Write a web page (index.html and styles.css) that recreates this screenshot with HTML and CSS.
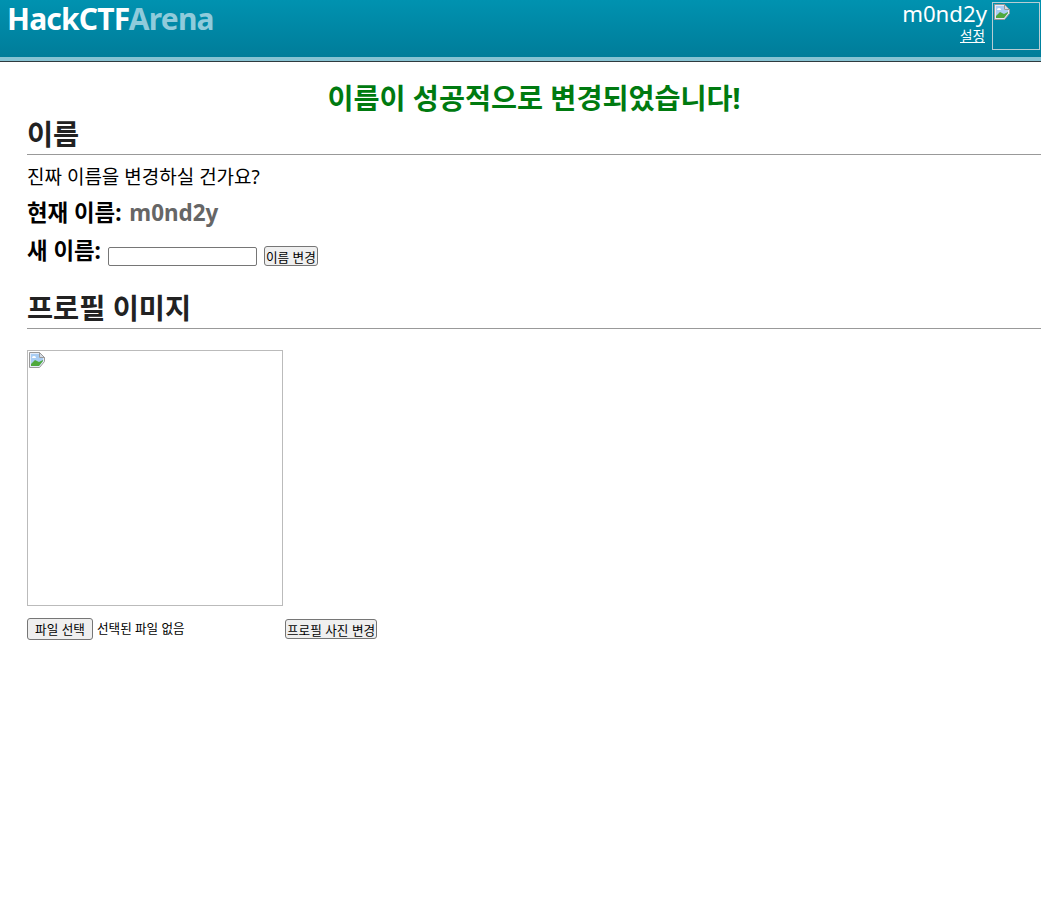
FILE: index.html
```html
<!DOCTYPE html>
<html lang="ko">
<head>
<meta charset="utf-8">
<title>HackCTFArena</title>
<link rel="stylesheet" href="styles.css">
</head>
<body>
<header class="topbar">
  <div class="logo"><span class="logo-a">HackCTF</span><span class="logo-b">Arena</span></div>
  <div class="user">
    <div class="user-text">
      <div class="user-name">m0nd2y</div>
      <a class="user-link" href="#">설정</a>
    </div>
    <div class="avatar">
      <svg class="broken" width="16" height="16" viewBox="0 0 16 16"><path d="M.5.5h10l5 5v4l-5 6H.5z" fill="#e4ebf7" stroke="#9a9a9a"/><path d="M2 2h8v4h4v3l-4 5H2z" fill="#a9cdf3"/><path d="M3 6a2 2 0 0 1 4 0z" fill="#fff"/><path d="M2 14V12l4-4 4 2 4-2v1l-4 5z" fill="#4fa83d"/><path d="M10.500.5v5h5z" fill="#d5dbe4" stroke="#9a9a9a"/></svg>
    </div>
  </div>
</header>
<main class="content">
  <div class="notice">이름이 성공적으로 변경되었습니다!</div>
  <section class="panel">
    <h2 class="section-title">이름</h2>
    <p class="lead">진짜 이름을 변경하실 건가요?</p>
    <p class="field current"><b>현재 이름:</b> <span class="muted">m0nd2y</span></p>
    <form class="field new-name">
      <b>새 이름:</b>
      <input class="name-input" type="text">
      <button class="btn" type="button">이름 변경</button>
    </form>
  </section>
  <section class="panel">
    <h2 class="section-title">프로필 이미지</h2>
    <div class="photo">
      <svg class="broken" width="16" height="16" viewBox="0 0 16 16"><path d="M.5.5h10l5 5v4l-5 6H.5z" fill="#e4ebf7" stroke="#9a9a9a"/><path d="M2 2h8v4h4v3l-4 5H2z" fill="#a9cdf3"/><path d="M3 6a2 2 0 0 1 4 0z" fill="#fff"/><path d="M2 14V12l4-4 4 2 4-2v1l-4 5z" fill="#4fa83d"/><path d="M10.500.5v5h5z" fill="#d5dbe4" stroke="#9a9a9a"/></svg>
    </div>
    <form class="upload">
      <div class="file">
        <button class="btn file-btn" type="button">파일 선택</button>
        <span class="file-label">선택된 파일 없음</span>
      </div>
      <button class="btn" type="button">프로필 사진 변경</button>
    </form>
  </section>
</main>
</body>
</html>
```
FILE: styles.css
```css
* { box-sizing: border-box; }
html, body { margin: 0; padding: 0; background: #fff; }
body { font-family: "Noto Sans", "Noto Sans CJK KR", sans-serif; color: #000; }
.topbar {
  height: 62px;
  display: flex;
  justify-content: space-between;
  background: linear-gradient(#0092b0, #007b98);
  border-bottom: 1px solid #2f3b3f;
  box-shadow: inset 0 -4px 0 #86c3d3;
}
.logo { font-size: 30px; font-weight: 700; line-height: 38px; padding-left: 7px; letter-spacing: -0.8px; }
.logo-a { color: #fff; }
.logo-b { color: #8fcbdb; }
.user { display: flex; padding: 2px 1px 0 0; }
.user-text { display: flex; flex-direction: column; align-items: flex-end; margin-right: 5px; }
.user-name { color: #fff; font-size: 22.2px; line-height: 24px; }
.user-link { color: #fff; font-size: 13.6px; line-height: 19px; margin-right: 2px; text-decoration: underline; text-decoration-skip-ink: none; }
.avatar { width: 48px; height: 48px; padding: 1px; border: 1px solid #b8cdd3; }
.broken { display: block; }
.content { padding: 18px 0 0 27px; }
.notice { text-align: center; color: #007a10; font-size: 28.3px; font-weight: 700; line-height: 36px; }
.section-title { margin: 0; color: #222; font-size: 28.4px; font-weight: 700; line-height: 37px; padding-bottom: 1px; border-bottom: 1px solid #999; }
.lead { margin: 9px 0 0; font-size: 19px; line-height: 26px; }
.field { margin: 0; font-size: 22.4px; line-height: 30px; }
.current { margin-top: 8px; }
.muted { color: #666; font-weight: 700; margin-left: 2px; }
.new-name { margin-top: 8px; display: flex; align-items: center; gap: 7px; height: 30px; }
.name-input { width: 149px; height: 19px; margin-top: 10px; padding: 0; border: 1px solid #767676; border-radius: 2px; background: #fff; }
.btn { font: 12.6px "Noto Sans CJK KR", sans-serif; height: 20px; padding: 0 1px 2px; color: #000; background: #efefef; border: 1px solid #767676; border-radius: 3px; }
.new-name .btn { margin-top: 10px; }
.panel + .panel { margin-top: 24px; }
.photo { margin-top: 21px; width: 256px; height: 256px; padding: 1px; border: 1px solid #bbb; }
.upload { margin-top: 12px; display: flex; align-items: center; }
.file { width: 258px; display: flex; align-items: center; gap: 4px; font-size: 12.6px; }
.file-btn { padding: 0 6px 2px; height: 22px; width: 66px; }
.file-label { padding-bottom: 3px; }
```
